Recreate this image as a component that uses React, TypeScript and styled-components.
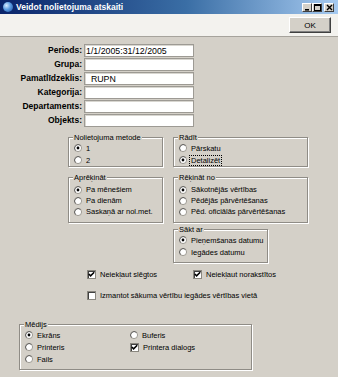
import styled, { createGlobalStyle } from "styled-components";

const GlobalStyle = createGlobalStyle`
  html, body {
    margin: 0;
    padding: 0;
    background: #d4d0c8;
  }

  body {
    font-family: "Liberation Sans", Arial, sans-serif;
    color: #000;
  }
`;

const fields = [
  { label: "Periods:", value: "1/1/2005:31/12/2005" },
  { label: "Grupa:", value: "" },
  { label: "Pamatlīdzeklis:", value: "  RUPN" },
  { label: "Kategorija:", value: "" },
  { label: "Departaments:", value: "" },
  { label: "Objekts:", value: "" },
];

const Radio = ({ checked }: { checked?: boolean }) => (
  <svg width="8" height="8" viewBox="0 0 12 12">
    <circle cx="6" cy="6" r="5.4" fill="#fff" stroke="#8a877f" strokeWidth="1.2" />
    <path d="M2.2 9.8 A5.4 5.4 0 0 1 9.8 2.2" fill="none" stroke="#404040" strokeWidth="1" />
    {checked && <circle cx="6" cy="6" r="2.1" fill="#000" />}
  </svg>
);

const Check = ({ checked }: { checked?: boolean }) => (
  <CheckBox>
    {checked && (
      <svg width="7" height="7" viewBox="0 0 7 7">
        <path d="M0.8 3 L2.6 4.8 L6.2 1.2" fill="none" stroke="#000" strokeWidth="1.6" />
      </svg>
    )}
  </CheckBox>
);

const App = () => {
  return (
    <Window>
      <GlobalStyle />
      <TitleBar>
        <AppIcon />
        <Title>Veidot nolietojuma atskaiti</Title>
        <Caption>
          <CapButton>
            <svg width="7" height="7" viewBox="0 0 7 7">
              <rect x="1" y="5" width="4" height="1.6" fill="#000" />
            </svg>
          </CapButton>
          <CapButton>
            <svg width="7" height="7" viewBox="0 0 7 7">
              <rect x="0.5" y="0.5" width="6" height="6" fill="none" stroke="#000" strokeWidth="1" />
              <rect x="0.5" y="0.5" width="6" height="1.5" fill="#000" />
            </svg>
          </CapButton>
          <CapButton $gap>
            <svg width="7" height="7" viewBox="0 0 7 7">
              <path d="M1 1 L6 6 M6 1 L1 6" stroke="#000" strokeWidth="1.4" />
            </svg>
          </CapButton>
        </Caption>
      </TitleBar>

      <Toolbar>
        <OkButton>OK</OkButton>
      </Toolbar>

      <Body>
        <Fields>
          {fields.map((f) => (
            <FieldRow key={f.label}>
              <FieldLabel>{f.label}</FieldLabel>
              <FieldInput readOnly defaultValue={f.value} />
            </FieldRow>
          ))}
        </Fields>

        <GroupGrid>
          <Group $pt={0} $pb={0}>
            <Legend>Nolietojuma metode</Legend>
            <Options $row={12}>
              <Option><Radio checked /><span>1</span></Option>
              <Option><Radio /><span>2</span></Option>
            </Options>
          </Group>
          <Group $pt={0} $pb={0}>
            <Legend>Rādīt</Legend>
            <Options $row={12}>
              <Option><Radio /><span>Pārskatu</span></Option>
              <Option><Radio checked /><Focused>Detalizēt</Focused></Option>
            </Options>
          </Group>
          <Group $pt={2} $pb={5}>
            <Legend>Aprēķināt</Legend>
            <Options $row={11}>
              <Option><Radio checked /><span>Pa mēnešiem</span></Option>
              <Option><Radio /><span>Pa dienām</span></Option>
              <Option><Radio /><span>Saskaņā ar nol.met.</span></Option>
            </Options>
          </Group>
          <Group $pt={2} $pb={5}>
            <Legend>Rēķināt no</Legend>
            <Options $row={11}>
              <Option><Radio checked /><span>Sākotnējās vērtības</span></Option>
              <Option><Radio /><span>Pēdējās pārvērtēšanas</span></Option>
              <Option><Radio /><span>Pēd. oficiālās pārvērtēšanas</span></Option>
            </Options>
          </Group>
        </GroupGrid>

        <StartRow>
          <Group $pt={0} $pb={4}>
            <Legend>Sākt ar</Legend>
            <Options $row={12}>
              <Option><Radio checked /><span>Pieņemšanas datumu</span></Option>
              <Option><Radio /><span>Iegādes datumu</span></Option>
            </Options>
          </Group>
        </StartRow>

        <CheckRow $top={5}>
          <CheckItem>
            <Check checked />
            <span>Neiekļaut slēgtos</span>
          </CheckItem>
          <CheckItem>
            <Check checked />
            <span>Neiekļaut norakstītos</span>
          </CheckItem>
        </CheckRow>

        <CheckRow $top={9}>
          <CheckItem>
            <Check />
            <span>Izmantot sākuma vērtību iegādes vērtības vietā</span>
          </CheckItem>
        </CheckRow>

        <MediaGroup $pt={0} $pb={4}>
          <Legend>Mēdijs</Legend>
          <MediaGrid>
            <Option><Radio checked /><span>Ekrāns</span></Option>
            <Option><Radio /><span>Printeris</span></Option>
            <Option><Radio /><span>Fails</span></Option>
            <Option><Radio /><span>Buferis</span></Option>
            <Option $gap={4}><Check checked /><span>Printera dialogs</span></Option>
          </MediaGrid>
        </MediaGroup>
      </Body>
    </Window>
  );
};

export default App;

const Window = styled.div`
  width: 338px;
  height: 377px;
  overflow: hidden;

  display: flex;
  flex-direction: column;

  background: #d4d0c8;
`;

const TitleBar = styled.div`
  height: 14px;
  padding: 0 4px 0 3px;
  box-sizing: border-box;

  display: flex;
  align-items: center;
  gap: 3px;

  background: linear-gradient(to right, #0a246a 0%, #3a6ea5 55%, #a6caf0 100%);
`;

const AppIcon = styled.div`
  width: 10px;
  height: 10px;
  border-radius: 50%;
  background: radial-gradient(circle at 35% 35%, #d8ecff 0%, #5a9be0 45%, #1d4f9c 100%);
`;

const Title = styled.div`
  flex: 1;
  color: #fff;
  font-size: 8.5px;
  font-weight: 700;
  white-space: nowrap;
`;

const Caption = styled.div`
  display: flex;
  align-items: center;
`;

const CapButton = styled.div<{ $gap?: boolean }>`
  width: 10px;
  height: 9px;
  margin-left: ${(p) => (p.$gap ? "2px" : "0")};
  box-sizing: border-box;

  display: flex;
  align-items: center;
  justify-content: center;

  background: #d4d0c8;
  border: 1px solid;
  border-color: #fff #404040 #404040 #fff;
`;

const Toolbar = styled.div`
  height: 23px;
  padding-right: 7px;
  box-sizing: border-box;

  display: flex;
  align-items: center;
  justify-content: flex-end;

  background: #f3f2ee;
  border-bottom: 1px solid #a6a39c;
`;

const OkButton = styled.div`
  width: 42px;
  height: 16px;
  box-sizing: border-box;

  display: flex;
  align-items: center;
  justify-content: center;

  font-size: 8px;
  background: #d4d0c8;
  border: 1px solid;
  border-color: #fff #404040 #404040 #fff;
  box-shadow: inset -1px -1px 0 #808080;
`;

const Body = styled.div`
  flex: 1;
  padding-top: 7px;

  display: flex;
  flex-direction: column;
`;

const Fields = styled.div`
  display: flex;
  flex-direction: column;
  gap: 1px;
`;

const FieldRow = styled.div`
  display: grid;
  grid-template-columns: 82px 110px;
  column-gap: 2px;
  align-items: center;
`;

const FieldLabel = styled.div`
  text-align: right;
  font-size: 8.5px;
  font-weight: 700;
  line-height: 13px;
  white-space: nowrap;
`;

const FieldInput = styled.input`
  width: 110px;
  height: 13px;
  margin: 0;
  padding: 0 1px;
  box-sizing: border-box;

  font-family: "Liberation Sans", Arial, sans-serif;
  font-size: 8.8px;
  color: #000;
  white-space: pre;

  background: #fff;
  border: 1px solid #9d9a94;
  box-shadow: inset 1px 1px 0 #d8d6d0;
  outline: none;
`;

const GroupGrid = styled.div`
  margin-top: 6px;
  padding-left: 68px;

  display: grid;
  grid-template-columns: 95px 135px;
  column-gap: 10px;
  row-gap: 6px;
`;

const Group = styled.fieldset<{ $pt: number; $pb: number }>`
  margin: 0;
  min-width: 0;
  padding: ${(p) => p.$pt}px 4px ${(p) => p.$pb}px 5px;
  border: 1px solid #8f8c86;
  box-shadow: inset 1px 1px 0 #fff, 1px 1px 0 #fff;
`;

const Legend = styled.legend`
  margin-left: -1px;
  padding: 0 1px;
  font-size: 7.5px;
  line-height: 9px;
  background: #d4d0c8;
`;

const Options = styled.div<{ $row: number }>`
  display: grid;
  grid-auto-rows: ${(p) => p.$row}px;
`;

const Option = styled.div<{ $gap?: number }>`
  display: flex;
  align-items: center;
  gap: ${(p) => p.$gap ?? 4}px;

  font-size: 7.5px;
  white-space: nowrap;
`;

const Focused = styled.span`
  outline: 1px dotted #000;
  padding: 0 1px;
  margin-left: -1px;
`;

const StartRow = styled.div`
  margin-top: 2px;
  padding-left: 173px;

  display: grid;
  grid-template-columns: 95px;
`;

const CheckRow = styled.div<{ $top: number }>`
  height: 12px;
  margin-top: ${(p) => p.$top}px;
  padding-left: 87px;

  display: grid;
  grid-template-columns: 106px auto;
  align-items: center;
`;

const CheckItem = styled.div`
  display: flex;
  align-items: center;
  gap: 4px;

  font-size: 7.5px;
  white-space: nowrap;
`;

const CheckBox = styled.div`
  width: 9px;
  height: 9px;
  box-sizing: border-box;
  flex-shrink: 0;

  display: flex;
  align-items: center;
  justify-content: center;

  background: #fff;
  border: 1px solid #8a877f;
  box-shadow: inset 1px 1px 0 #404040;
`;

const MediaGroup = styled(Group)`
  width: 233px;
  box-sizing: border-box;
  margin: 19px 0 0 19px;
`;

const MediaGrid = styled.div`
  display: grid;
  grid-template-columns: 105px auto;
  grid-template-rows: repeat(3, 12px);
  grid-auto-flow: column;
`;
